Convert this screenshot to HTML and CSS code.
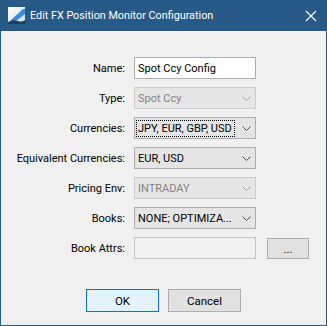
FILE: index.html
```html
<!DOCTYPE html>
<html lang="en">
<head>
    <meta charset="UTF-8">
    <title>Edit FX Position Monitor Configuration</title>
    <link rel="stylesheet" href="styles.css">
</head>
<body>
    <div class="window">
        <div class="titlebar">
            <svg class="app-icon" width="17" height="17" viewBox="0 0 17 17">
                <defs>
                    <linearGradient id="bg" x1="0" y1="0" x2="1" y2="1">
                        <stop offset="0" stop-color="#ffffff"/>
                        <stop offset="1" stop-color="#c7def1"/>
                    </linearGradient>
                </defs>
                <rect x="0" y="0" width="17" height="17" fill="url(#bg)"/>
                <path d="M2 14 L15 2 L17 2 L17 7 L8 14 Z" fill="#3b8ad2"/>
                <path d="M0 15 Q5 12 10 14 Q14 15.5 17 13 L17 17 L0 17 Z" fill="#173f66"/>
            </svg>
            <span class="title">Edit FX Position Monitor Configuration</span>
            <svg class="close" width="12" height="12" viewBox="0 0 12 12">
                <path d="M1 1 L11 11 M11 1 L1 11" stroke="#ffffff" stroke-width="1.2"/>
            </svg>
        </div>

        <div class="content">
            <div class="form">
                <label>Name:</label>
                <div class="field text-field">Spot Ccy Config</div>
                <div></div>

                <label>Type:</label>
                <div class="field combo disabled"><span class="value">Spot Ccy</span><span class="arrow"></span></div>
                <div></div>

                <label>Currencies:</label>
                <div class="field combo"><span class="value focused">JPY, EUR, GBP, USD</span><span class="arrow"></span></div>
                <div></div>

                <label>Equivalent Currencies:</label>
                <div class="field combo"><span class="value">EUR, USD</span><span class="arrow"></span></div>
                <div></div>

                <label>Pricing Env:</label>
                <div class="field combo disabled"><span class="value">INTRADAY</span><span class="arrow"></span></div>
                <div></div>

                <label>Books:</label>
                <div class="field combo"><span class="value">NONE; OPTIMIZA...</span><span class="arrow"></span></div>
                <div></div>

                <label>Book Attrs:</label>
                <div class="field text-field empty"></div>
                <button class="btn small">...</button>
            </div>

            <div class="actions">
                <button class="btn default">OK</button>
                <button class="btn">Cancel</button>
            </div>
        </div>
    </div>
</body>
</html>
```

FILE: styles.css
```css
:root {
    --accent: #275a87;
    --face: #f0f0f0;
}

body {
    margin: 0;
    font-family: Roboto, "Liberation Sans", sans-serif;
    font-size: 11px;
    color: #000000;
    background: var(--face);
}

.window {
    width: 327px;
    height: 326px;
    box-sizing: border-box;
    border: 1px solid var(--accent);
    border-top: none;
    background: var(--face);
    display: flex;
    flex-direction: column;
}

.titlebar {
    height: 31px;
    background: var(--accent);
    color: #ffffff;
    display: flex;
    align-items: center;
    margin: 0 -1px;
    padding: 0 0 0 8px;
}

.app-icon {
    flex: none;
    margin-right: 5px;
}

.title {
    flex: 1;
    font-size: 10.8px;
}

.close {
    margin-right: 10px;
}

.content {
    padding-top: 26px;
}

.form {
    display: grid;
    grid-template-columns: 124px 122px 43px;
    grid-auto-rows: 22px;
    column-gap: 9px;
    row-gap: 8px;
}

.form label {
    text-align: right;
    align-self: center;
    white-space: nowrap;
}

.field {
    box-sizing: border-box;
    height: 22px;
    display: flex;
    align-items: center;
    padding-left: 3px;
    white-space: nowrap;
    overflow: hidden;
}

.text-field {
    background: #ffffff;
    border: 1px solid #abadb3;
}

.text-field.empty {
    background: var(--face);
    border-color: #c4c4c4;
}

.combo {
    background: #e5e5e5;
    border: 1px solid #acacac;
    padding-left: 1px;
}

.combo .value {
    flex: 1;
    min-width: 0;
    overflow: hidden;
    padding: 1px 1px;
    border: 1px dotted transparent;
}

.combo .value.focused {
    border-color: #000000;
    margin-right: 2px;
}

.combo .arrow {
    width: 18px;
    height: 20px;
    flex: none;
    background: no-repeat center / 9px 5px url("data:image/svg+xml,%3Csvg xmlns='http://www.w3.org/2000/svg' width='9' height='5' viewBox='0 0 9 5'%3E%3Cpath d='M0.5 0.5 L4.5 4.5 L8.5 0.5' fill='none' stroke='%23505050' stroke-width='1'/%3E%3C/svg%3E");
}

.combo.disabled {
    background: #e6e6e6;
    border-color: #cccccc;
    color: #838383;
}

.combo.disabled .arrow {
    opacity: 0.45;
}

.btn {
    box-sizing: border-box;
    font-family: inherit;
    font-size: 11.5px;
    background: #e1e1e1;
    border: 1px solid #adadad;
    color: #000000;
    padding: 0;
    margin: 0;
}

.btn.small {
    width: 42px;
    height: 21px;
    margin: 1px 0 0 2px;
    align-self: start;
}

.btn.default {
    background: #e5f1fb;
    border-color: #0078d7;
}

.actions {
    display: flex;
    justify-content: center;
    gap: 9px;
    margin-top: 30px;
}

.actions .btn {
    width: 73px;
    height: 23px;
}
```
